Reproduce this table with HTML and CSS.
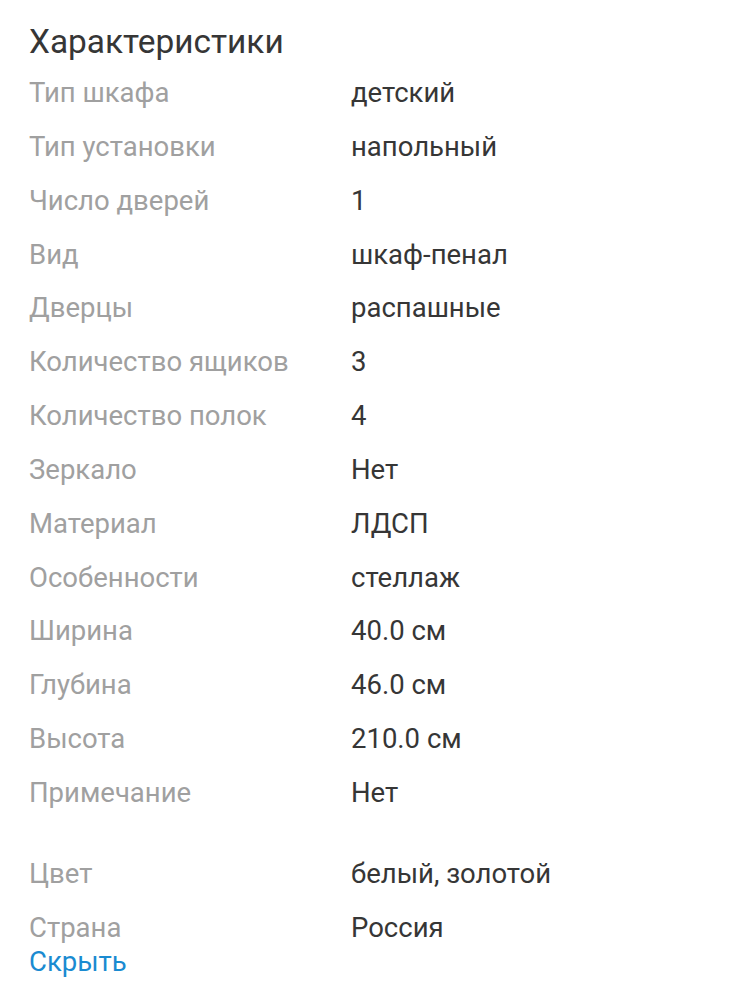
FILE: index.html
```html
<!DOCTYPE html>
<html lang="ru">
<head>
<meta charset="utf-8">
<link rel="stylesheet" href="styles.css">
</head>
<body>
<section class="specs">
  <h2 class="title">Характеристики</h2>
  <dl class="list">
    <div class="row"><dt>Тип шкафа</dt><dd>детский</dd></div>
    <div class="row"><dt>Тип установки</dt><dd>напольный</dd></div>
    <div class="row"><dt>Число дверей</dt><dd>1</dd></div>
    <div class="row"><dt>Вид</dt><dd>шкаф-пенал</dd></div>
    <div class="row"><dt>Дверцы</dt><dd>распашные</dd></div>
    <div class="row"><dt>Количество ящиков</dt><dd>3</dd></div>
    <div class="row"><dt>Количество полок</dt><dd>4</dd></div>
    <div class="row"><dt>Зеркало</dt><dd>Нет</dd></div>
    <div class="row"><dt>Материал</dt><dd>ЛДСП</dd></div>
    <div class="row"><dt>Особенности</dt><dd>стеллаж</dd></div>
    <div class="row"><dt>Ширина</dt><dd>40.0 см</dd></div>
    <div class="row"><dt>Глубина</dt><dd>46.0 см</dd></div>
    <div class="row"><dt>Высота</dt><dd>210.0 см</dd></div>
    <div class="row"><dt>Примечание</dt><dd>Нет</dd></div>
  </dl>
  <dl class="list list-extra">
    <div class="row"><dt>Цвет</dt><dd>белый, золотой</dd></div>
    <div class="row row-last"><dt>Страна</dt><dd>Россия</dd></div>
  </dl>
  <a class="toggle" href="#">Скрыть</a>
</section>
</body>
</html>
```
FILE: styles.css
```css
html, body {
  margin: 0;
  padding: 0;
  background: #ffffff;
}
body {
  font-family: Roboto, "Noto Sans", sans-serif;
}
.specs {
  padding: 22px 30px 0 29px;
}
.title {
  margin: 0;
  font-size: 33.4px;
  font-weight: 400;
  line-height: 40px;
  color: #363636;
}
.list {
  margin: 0;
  padding: 0;
}
.list:first-of-type {
  margin-top: 4px;
}
.list-extra {
  margin-top: 27px;
}
.row {
  display: grid;
  grid-template-columns: 322px 1fr;
  padding: 12px 0;
  line-height: 29.85px;
  font-size: 27.5px;
}
.row-last {
  padding-bottom: 0;
}
dt {
  color: #a0a0a0;
}
dd {
  margin: 0;
  color: #363636;
}
.toggle {
  display: block;
  font-size: 27.5px;
  line-height: 30px;
  color: #1a8bd1;
  text-decoration: none;
  margin-top: 4px;
}
```
